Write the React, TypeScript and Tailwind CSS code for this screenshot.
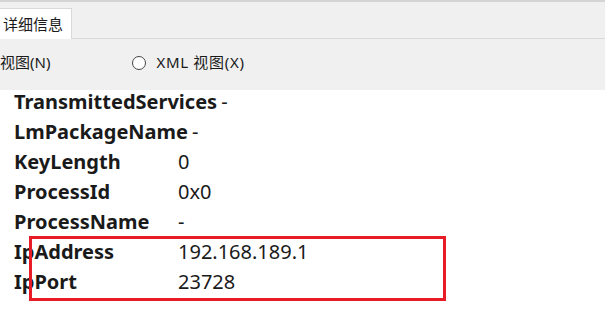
const rows: [string, string][] = [
	["TransmittedServices", "-"],
	["LmPackageName", "-"],
	["KeyLength", "0"],
	["ProcessId", "0x0"],
	["ProcessName", "-"],
	["IpAddress", "192.168.189.1"],
	["IpPort", "23728"],
];

const App = () => {
	return (
		<div
			className="w-[605px] h-[310px] overflow-hidden bg-[#f0f0f0] flex flex-col relative"
			style={{ fontFamily: '"Noto Sans", "Noto Sans CJK SC", sans-serif' }}
		>
			{/* Tabs */}
			<div className="h-[39px] border-t-2 border-[#d4d4d4] flex items-end border-b border-b-[#d9d9d9]">
				<div className="h-[31px] w-[72px] bg-white border-t border-r border-[#d9d9d9] flex items-center pl-[3px] -mb-px text-[15px] text-[#1a1a1a]">
					详细信息
				</div>
			</div>

			{/* View switch */}
			<div className="h-[51px] flex items-center text-[15px] text-[#1a1a1a] pb-[4px]">
				<span>视图(N)</span>
				<span className="ml-[82px] w-[14px] h-[14px] rounded-full border border-[#444] bg-white" />
				<span className="ml-[10px] tracking-[0.7px]">XML 视图(X)</span>
			</div>

			{/* Details */}
			<div className="flex-1 bg-white pl-[14px]">
				<div className="-mt-[3px] flex flex-col text-[20px] text-[#1a1a1a]">
					{rows.map(([k, v]) => (
						<div key={k} className="h-[30px] flex items-center">
							<span className="min-w-[164px] font-bold pr-[4px]">{k}</span>
							<span>{v}</span>
						</div>
					))}
				</div>
			</div>

			{/* highlight */}
			<div className="absolute left-[29px] top-[236px] w-[417px] h-[65px] border-[3px] border-[#e81c27]" />
		</div>
	);
};

export default App;
